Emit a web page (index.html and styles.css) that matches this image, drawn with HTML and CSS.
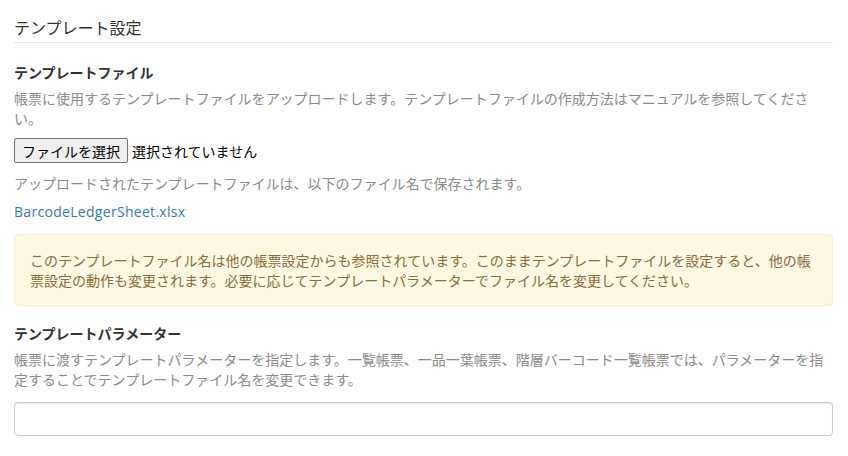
FILE: index.html
```html
<!DOCTYPE html>
<html lang="ja">
<head>
	<meta charset="UTF-8">
	<meta name="viewport" content="width=device-width, initial-scale=1.0">
	<title>テンプレート設定</title>
	<link rel="stylesheet" href="styles.css">
</head>
<body>
	<div class="panel">
		<h4 class="section-title">テンプレート設定</h4>

		<div class="form-group">
			<label class="control-label">テンプレートファイル</label>
			<p class="help-block">帳票に使用するテンプレートファイルをアップロードします。テンプレートファイルの作成方法はマニュアルを参照してください。</p>
			<div class="file-picker">
				<button type="button" class="file-btn">ファイルを選択</button>
				<span class="file-name">選択されていません</span>
			</div>
			<p class="help-block note">アップロードされたテンプレートファイルは、以下のファイル名で保存されます。</p>
			<a class="file-link" href="#">BarcodeLedgerSheet.xlsx</a>
			<div class="alert-warning">
				このテンプレートファイル名は他の帳票設定からも参照されています。このままテンプレートファイルを設定すると、他の帳票設定の動作も変更されます。必要に応じてテンプレートパラメーターでファイル名を変更してください。
			</div>
		</div>

		<div class="form-group">
			<label class="control-label">テンプレートパラメーター</label>
			<p class="help-block">帳票に渡すテンプレートパラメーターを指定します。一覧帳票、一品一葉帳票、階層バーコード一覧帳票では、パラメーターを指定することでテンプレートファイル名を変更できます。</p>
			<input type="text" class="form-control">
		</div>
	</div>
</body>
</html>
```

FILE: styles.css
```css
*{
	margin: 0;
	padding: 0;
	box-sizing: border-box;
}
body{
	background: #fff;
	font-family: "Noto Sans CJK JP", sans-serif;
	font-size: 14px;
	line-height: 20px;
	color: #333;
}
.panel{
	width: 819px;
	margin-left: 14px;
}
.section-title{
	margin-top: 16px;
	padding-bottom: 4px;
	font-size: 16px;
	line-height: 22px;
	font-weight: normal;
	color: #333;
	border-bottom: 1px solid #e5e5e5;
}
.form-group{
	display: flex;
	flex-direction: column;
	align-items: flex-start;
}
.form-group:first-of-type{
	margin-top: 19px;
}
.form-group + .form-group{
	margin-top: 17px;
}
.control-label{
	font-weight: bold;
	color: #333;
}
.help-block{
	margin-top: 6px;
	color: #8c8c8c;
}
.file-picker{
	display: flex;
	align-items: center;
	gap: 4px;
	margin-top: 10px;
}
.file-btn{
	height: 25px;
	padding: 0 7px;
	font: inherit;
	font-size: 14px;
	color: #000;
	background: #efefef;
	border: 1px solid #767676;
	border-radius: 2px;
}
.file-name{
	color: #000;
}
.note{
	margin-top: 10px;
}
.file-link{
	margin-top: 9px;
	font-family: "Open Sans", sans-serif;
	letter-spacing: 0.3px;
	color: #337ab7;
	text-decoration: none;
}
.alert-warning{
	width: 100%;
	margin-top: 12px;
	padding: 15px;
	color: #8a6d3b;
	background: #fcf8e3;
	border: 1px solid #faebcc;
	border-radius: 4px;
}
.form-control{
	width: 100%;
	height: 34px;
	margin-top: 13px;
	padding: 6px 12px;
	font: inherit;
	border: 1px solid #ccc;
	border-radius: 4px;
	box-shadow: inset 0 1px 1px rgba(0,0,0,.075);
}
```
